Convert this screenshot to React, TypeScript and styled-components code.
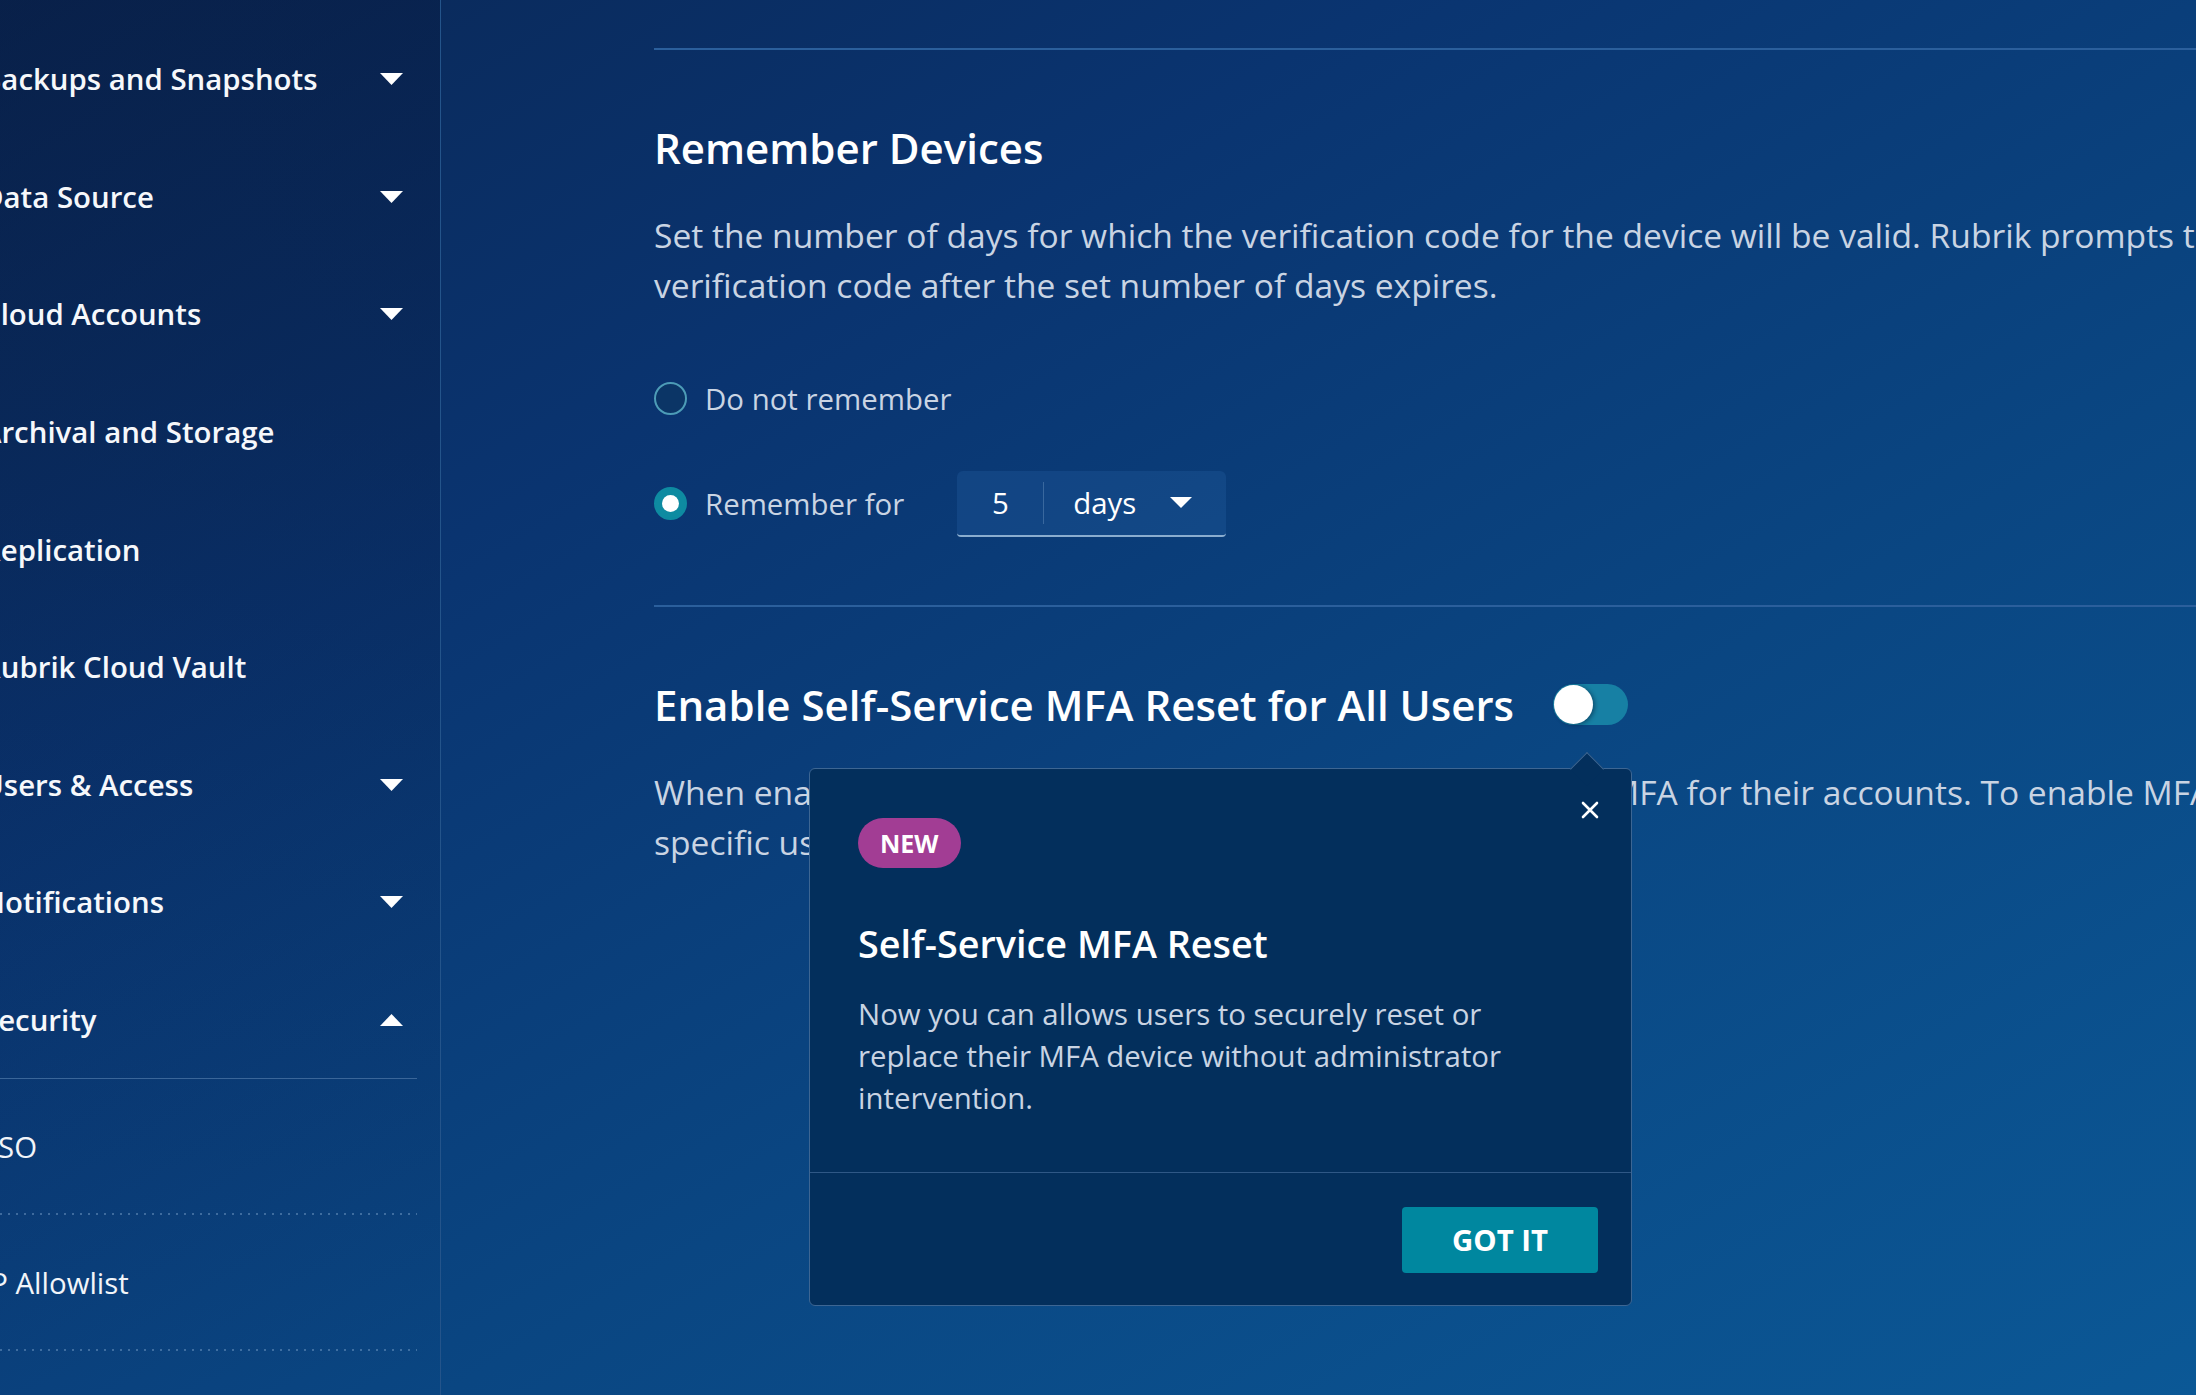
import React from 'react';
import styled, { createGlobalStyle } from 'styled-components';

const GlobalStyle = createGlobalStyle`
  html, body {
    margin: 0;
    padding: 0;
    height: 100%;
    overflow: hidden;
  }
  body {
    font-family: 'Open Sans', 'Noto Sans', sans-serif;
    color: #ffffff;
  }
  * {
    box-sizing: border-box;
  }
`;

const Page = styled.div`
  display: grid;
  grid-template-columns: 441px 1fr;
  width: 100vw;
  height: 100vh;
  overflow: hidden;
  background: linear-gradient(150deg, #0a2755 0%, #0a3470 30%, #0a4682 62%, #0b5896 100%);
`;

const Sidebar = styled.aside`
  border-right: 1px solid #24548a;
  padding: 21px 23px 0 0;
  overflow: hidden;
  background: linear-gradient(180deg, rgba(6, 20, 52, 0.35) 0%, rgba(6, 20, 52, 0.12) 60%, rgba(6, 20, 52, 0) 100%);
`;

const NavList = styled.ul`
  list-style: none;
  margin: 0;
  padding: 0;
`;

const NavItem = styled.li<{ $open?: boolean }>`
  display: flex;
  align-items: center;
  justify-content: space-between;
  height: 117.6px;
  padding-right: 14px;
  border-bottom: ${({ $open }) => ($open ? '1px solid #3a6699' : '1px solid transparent')};
`;

const NavLabel = styled.span`
  margin-left: -18px;
  font-size: 29.4px;
  font-weight: 600;
  color: #f6f8fb;
  white-space: nowrap;
`;

const SubItem = styled.li`
  display: flex;
  align-items: center;
  height: 136px;
  background-image: linear-gradient(to right, rgba(128, 165, 205, 0.45) 2px, transparent 2px);
  background-size: 8px 2px;
  background-repeat: repeat-x;
  background-position: left bottom;
`;

const SubLabel = styled.span`
  margin-left: -18px;
  font-size: 29.4px;
  font-weight: 400;
  color: #f2f5f9;
  white-space: nowrap;
`;

const Main = styled.main`
  padding: 48px 0 0 213px;
  overflow: hidden;
  min-width: 0;
`;

const Rule = styled.div`
  height: 2px;
  background: #2b5f9c;
`;

const Section = styled.section<{ $bottom?: number }>`
  padding: 71px 0 ${({ $bottom }) => $bottom ?? 0}px 0;
`;

const Heading = styled.h2`
  margin: 0;
  font-size: 42px;
  line-height: 53px;
  font-weight: 600;
  color: #ffffff;
  white-space: nowrap;
`;

const Paragraph = styled.p`
  margin: 36px 0 0 0;
  font-size: 33.6px;
  line-height: 50.4px;
  color: #c9d4e3;
  white-space: nowrap;
`;

const RadioGroup = styled.div`
  display: flex;
  flex-direction: column;
  gap: 39px;
  margin-top: 55px;
`;

const RadioRow = styled.label`
  display: flex;
  align-items: center;
  height: 66px;
`;

const Radio = styled.span<{ $checked?: boolean }>`
  position: relative;
  flex: none;
  width: 33px;
  height: 33px;
  border-radius: 50%;
  border: 2px solid ${({ $checked }) => ($checked ? '#0e8ba1' : '#4d9cb7')};
  background: ${({ $checked }) => ($checked ? '#0e8ba1' : '#0b3566')};
  display: flex;
  align-items: center;
  justify-content: center;

  &::after {
    content: '';
    display: ${({ $checked }) => ($checked ? 'block' : 'none')};
    width: 17px;
    height: 17px;
    border-radius: 50%;
    background: #ffffff;
  }
`;

const RadioLabel = styled.span`
  margin-left: 18px;
  font-size: 29.4px;
  color: #c9d4e3;
`;

const DurationSelect = styled.div`
  display: flex;
  align-items: center;
  width: 269px;
  height: 66px;
  margin-left: 53px;
  border-radius: 6px 6px 4px 4px;
  background: rgba(40, 100, 170, 0.28);
  border-bottom: 2px solid #8aadcf;
  color: #ffffff;
  font-size: 29.4px;
`;

const DurationValue = styled.span`
  width: 87px;
  height: 42px;
  display: flex;
  align-items: center;
  justify-content: center;
  border-right: 1px solid rgba(150, 185, 220, 0.3);
`;

const DurationUnit = styled.span`
  flex: 1;
  display: flex;
  align-items: center;
  justify-content: space-between;
  padding: 0 34px 0 29px;
`;

const HeadingRow = styled.div`
  display: flex;
  align-items: center;
`;

const ToggleAnchor = styled.div`
  position: relative;
  margin-left: 39px;
  display: flex;
`;

const Toggle = styled.span`
  width: 75px;
  height: 41px;
  border-radius: 21px;
  background: #1780a4;
  display: flex;
  align-items: center;
  padding-left: 1px;

  &::before {
    content: '';
    width: 39px;
    height: 39px;
    border-radius: 50%;
    background: #ffffff;
    box-shadow: 2px 1px 4px rgba(0, 20, 50, 0.45);
  }
`;

const Popover = styled.div`
  position: absolute;
  top: calc(100% + 43px);
  right: -4px;
  width: 823px;
  background: #032f5c;
  border: 1px solid #3d6693;
  border-radius: 6px;
  z-index: 2;

  &::before {
    content: '';
    position: absolute;
    top: -12px;
    right: 32px;
    width: 23px;
    height: 23px;
    background: #032f5c;
    border-top: 1px solid #3d6693;
    border-left: 1px solid #3d6693;
    transform: rotate(45deg);
  }
`;

const PopoverBody = styled.div`
  padding: 49px 48px 53px 48px;
`;

const CloseButton = styled.button`
  position: absolute;
  top: 30px;
  right: 30px;
  width: 22px;
  height: 22px;
  padding: 0;
  border: none;
  background: none;
  display: flex;
  align-items: center;
  justify-content: center;
  cursor: pointer;
`;

const Badge = styled.span`
  display: inline-flex;
  align-items: center;
  height: 50px;
  padding: 0 22px;
  border-radius: 25px;
  background: #a23d94;
  color: #ffffff;
  font-size: 25px;
  font-weight: 700;
`;

const PopoverTitle = styled.h3`
  margin: 52px 0 0 0;
  font-size: 37.8px;
  line-height: 47px;
  font-weight: 600;
  color: #ffffff;
`;

const PopoverText = styled.p`
  margin: 26px 0 0 0;
  font-size: 29.4px;
  line-height: 42px;
  color: #c9d4e3;
`;

const PopoverFooter = styled.div`
  display: flex;
  justify-content: flex-end;
  padding: 34px 33px 32px 0;
  border-top: 1px solid #2f5886;
`;

const PrimaryButton = styled.button`
  width: 196px;
  height: 66px;
  border: none;
  border-radius: 4px;
  background: #00879f;
  color: #ffffff;
  font-family: 'Open Sans', sans-serif;
  font-size: 29.4px;
  font-weight: 700;
  cursor: pointer;
`;

const Caret = ({ up = false, width = 23, height = 12 }: { up?: boolean; width?: number; height?: number }) => (
  <svg width={width} height={height} viewBox={`0 0 ${width} ${height}`}>
    <path
      d={up ? `M0 ${height}H${width}L${width / 2} 0Z` : `M0 0H${width}L${width / 2} ${height}Z`}
      fill="#ffffff"
    />
  </svg>
);

const CloseIcon = () => (
  <svg width="18" height="18" viewBox="0 0 18 18">
    <path d="M2 2L16 16M16 2L2 16" stroke="#ffffff" strokeWidth="2.6" strokeLinecap="round" />
  </svg>
);

const navItems = [
  { label: 'Backups and Snapshots', caret: true },
  { label: 'Data Source', caret: true },
  { label: 'Cloud Accounts', caret: true },
  { label: 'Archival and Storage', caret: false },
  { label: 'Replication', caret: false },
  { label: 'Rubrik Cloud Vault', caret: false },
  { label: 'Users & Access', caret: true },
  { label: 'Notifications', caret: true },
];

const subItems = ['SSO', 'IP Allowlist'];

export default function App() {
  return (
    <>
      <GlobalStyle />
      <Page>
        <Sidebar>
          <NavList>
            {navItems.map((item) => (
              <NavItem key={item.label}>
                <NavLabel>{item.label}</NavLabel>
                {item.caret && <Caret />}
              </NavItem>
            ))}
            <NavItem $open>
              <NavLabel>Security</NavLabel>
              <Caret up />
            </NavItem>
            {subItems.map((label) => (
              <SubItem key={label}>
                <SubLabel>{label}</SubLabel>
              </SubItem>
            ))}
          </NavList>
        </Sidebar>

        <Main>
          <Rule />
          <Section $bottom={68}>
            <Heading>Remember Devices</Heading>
            <Paragraph>
              Set the number of days for which the verification code for the device will be valid. Rubrik prompts the user to enter a new
              <br />
              verification code after the set number of days expires.
            </Paragraph>
            <RadioGroup>
              <RadioRow>
                <Radio />
                <RadioLabel>Do not remember</RadioLabel>
              </RadioRow>
              <RadioRow>
                <Radio $checked />
                <RadioLabel>Remember for</RadioLabel>
                <DurationSelect>
                  <DurationValue>5</DurationValue>
                  <DurationUnit>
                    days
                    <Caret width={22} height={11} />
                  </DurationUnit>
                </DurationSelect>
              </RadioRow>
            </RadioGroup>
          </Section>
          <Rule />
          <Section>
            <HeadingRow>
              <Heading>Enable Self-Service MFA Reset for All Users</Heading>
              <ToggleAnchor>
                <Toggle />
                <Popover>
                  <CloseButton aria-label="Close">
                    <CloseIcon />
                  </CloseButton>
                  <PopoverBody>
                    <Badge>NEW</Badge>
                    <PopoverTitle>Self-Service MFA Reset</PopoverTitle>
                    <PopoverText>
                      Now you can allows users to securely reset or
                      <br />
                      replace their MFA device without administrator
                      <br />
                      intervention.
                    </PopoverText>
                  </PopoverBody>
                  <PopoverFooter>
                    <PrimaryButton>GOT IT</PrimaryButton>
                  </PopoverFooter>
                </Popover>
              </ToggleAnchor>
            </HeadingRow>
            <Paragraph>
              When enabled, all users can reset their own devices used for MFA for their accounts. To enable MFA reset for
              <br />
              specific users, edit the user settings.
            </Paragraph>
          </Section>
        </Main>
      </Page>
    </>
  );
}
